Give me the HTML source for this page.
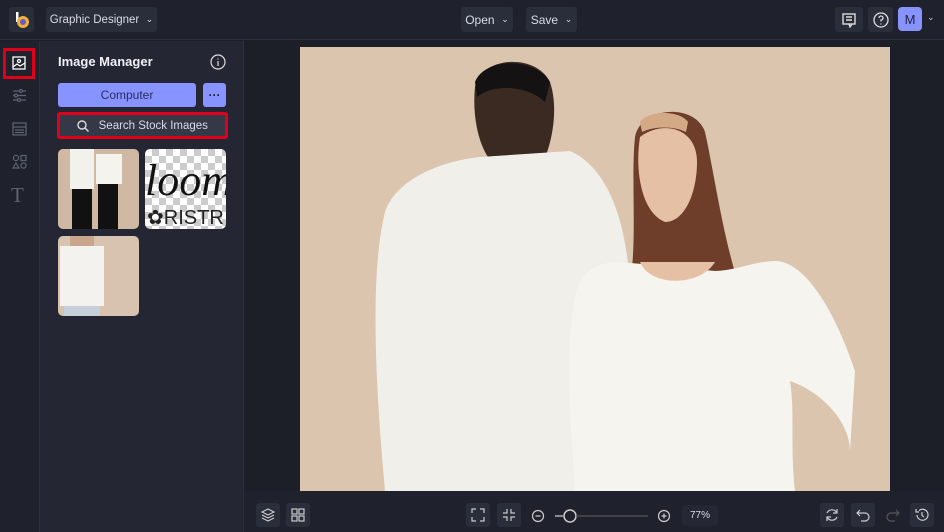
<!DOCTYPE html>
<html><head><style>
*{margin:0;padding:0;box-sizing:border-box}
body{width:944px;height:532px;background:#1c1f28;font-family:"Liberation Sans",sans-serif;position:relative;overflow:hidden;color:#e6e8ef}
.a{position:absolute}
.btn{position:absolute;background:#2a2e3a;border-radius:3px;color:#d8dbe4;font-size:12px;display:flex;align-items:center;justify-content:center}
</style></head><body>
<div class="a" style="left:0;top:0;width:944px;height:40px;background:#1f222c;border-bottom:1px solid #2c303b"></div>
<div class="a" style="left:0;top:41px;width:40px;height:491px;background:#1f222c;border-right:1px solid #2c303b"></div>
<div class="a" style="left:40px;top:41px;width:204px;height:491px;background:#242733;border-right:1px solid #2c303b"></div>
<div class="a" style="left:244px;top:491px;width:700px;height:41px;background:#1f222c"></div>
<div class="btn" style="left:9px;top:7px;width:25px;height:25px;background:#2a2e3a"><svg width="16" height="18"><rect x="2" y="1" width="2.5" height="10" fill="#fff"/><circle cx="9" cy="11" r="6" fill="#f2b134"/><circle cx="9" cy="11" r="3" fill="#6a5acd"/></svg></div>
<div class="btn" style="left:46px;top:7px;width:111px;height:25px;font-size:11.5px">Graphic Designer&nbsp;&nbsp;<span style="font-size:9px">⌄</span></div>
<div class="btn" style="left:461px;top:7px;width:52px;height:25px">Open&nbsp;&nbsp;<span style="font-size:9px">⌄</span></div>
<div class="btn" style="left:526px;top:7px;width:51px;height:25px">Save&nbsp;&nbsp;<span style="font-size:9px">⌄</span></div>
<div class="btn" style="left:835px;top:7px;width:28px;height:25px"><svg width="16" height="16" fill="none" stroke="#ddd" stroke-width="1.4"><rect x="2" y="2" width="12" height="10"/><path d="M5 5h6M5 8h6M8 12l1 3 2-3"/></svg></div>
<div class="btn" style="left:868px;top:7px;width:25px;height:25px"><svg width="16" height="16" fill="none" stroke="#ddd" stroke-width="1.3"><circle cx="8" cy="8" r="7"/><path d="M6 6a2 2 0 1 1 2 2v1.5M8 11.5v1"/></svg></div>
<div class="btn" style="left:898px;top:7px;width:24px;height:24px;background:#8793ff;color:#1e2340;font-size:13px;border-radius:4px">M</div>
<div class="a" style="left:927px;top:12px;font-size:9px;color:#ccc">⌄</div>
<div class="a" style="left:3px;top:48px;width:32px;height:31px;border:3px solid #e0001a"></div>
<svg class="a" style="left:12px;top:56px" width="14" height="14" fill="none" stroke="#fff" stroke-width="1.3"><rect x="1" y="1" width="12" height="12"/><circle cx="7" cy="5" r="1.5"/><path d="M1 11l4-3 3 2 5-3"/></svg>
<svg class="a" style="left:12px;top:88px" width="15" height="15" fill="none" stroke="#5d6372" stroke-width="1.2"><path d="M1 3h13M1 7.5h13M1 12h13"/><circle cx="9" cy="3" r="1.5" fill="#1f222c"/><circle cx="4" cy="7.5" r="1.5" fill="#1f222c"/><circle cx="7" cy="12" r="1.5" fill="#1f222c"/></svg>
<svg class="a" style="left:12px;top:122px" width="15" height="14" fill="none" stroke="#5d6372" stroke-width="1.2"><rect x="1" y="1" width="13" height="12"/><path d="M1 5h13M3 8h9M3 10.5h9"/></svg>
<svg class="a" style="left:12px;top:154px" width="15" height="15" fill="none" stroke="#5d6372" stroke-width="1.2"><circle cx="4" cy="4" r="2.6"/><rect x="9" y="1.5" width="5" height="5"/><path d="M4 9l3 5H1z"/><circle cx="11.5" cy="11.5" r="2.6"/></svg>
<div class="a" style="left:11px;top:183px;font-family:'Liberation Serif',serif;font-size:21px;color:#5d6372">T</div>
<div class="a" style="left:58px;top:54px;font-size:13px;font-weight:bold;color:#eef0f5">Image Manager</div>
<svg class="a" style="left:210px;top:54px" width="16" height="16" fill="none" stroke="#ddd" stroke-width="1.2"><circle cx="8" cy="8" r="7"/><path d="M8 7v5M8 4.5v1"/></svg>
<div class="btn" style="left:58px;top:83px;width:138px;height:24px;background:#8793ff;color:#2a2f60;font-size:12px">Computer</div>
<div class="btn" style="left:203px;top:83px;width:23px;height:24px;background:#8793ff;color:#1e2340;font-weight:bold">···</div>
<div class="btn" style="left:57px;top:112px;width:171px;height:27px;background:#343847;border:3px solid #e0001a;font-size:11.5px"><svg width="12" height="12" fill="none" stroke="#ddd" stroke-width="1.4"><circle cx="5" cy="5" r="4"/><path d="M8 8l3.5 3.5"/></svg>&nbsp;&nbsp;&nbsp;Search Stock Images</div>
<div class="a" style="left:58px;top:149px;width:81px;height:80px;background:#cfb9a4;border-radius:5px;overflow:hidden"><svg width="81" height="80"><rect x="12" y="0" width="24" height="40" fill="#f3f1ec"/><rect x="14" y="40" width="20" height="40" fill="#111"/><rect x="38" y="5" width="26" height="30" fill="#f5f3ee"/><rect x="40" y="35" width="20" height="45" fill="#111"/></svg></div>
<div class="a" style="left:145px;top:149px;width:81px;height:80px;background:repeating-conic-gradient(#ccc 0 25%,#fff 0 50%) 0 0/14px 14px;border-radius:5px;overflow:hidden"><div class="a" style="left:0;top:6px;font-family:'Liberation Serif',serif;font-style:italic;font-size:44px;color:#111">loom</div><div class="a" style="left:2px;top:56px;font-size:20px;color:#222">✿RISTR</div></div>
<div class="a" style="left:58px;top:236px;width:81px;height:80px;background:#d7c3b0;border-radius:5px;overflow:hidden"><svg width="81" height="80"><rect x="2" y="10" width="44" height="60" fill="#f4f2ee"/><rect x="6" y="70" width="36" height="10" fill="#c6d0db"/><rect x="12" y="0" width="24" height="10" fill="#caa58e"/></svg></div>
<svg class="a" style="left:300px;top:47px" width="590" height="444">
<rect width="590" height="444" fill="#dbc5ae"/>
<path d="M175 40c5-30 60-35 75-5 10 30 0 70-10 85-20 10-45 5-55-15-10-20-12-45-10-65z" fill="#3a2a22"/>
<path d="M175 35c10-25 60-25 75 0l-5 20c-15-15-50-20-68-5z" fill="#141212"/>
<path d="M180 110c-45 5-85 25-95 55-15 60-10 170 0 279h235c5-60 20-130 10-190 0-60-15-130-60-150z" fill="#f1efea"/>
<path d="M335 90c5-30 60-35 70-5 10 45 20 120 40 170l-120 5c15-50 5-120 10-170z" fill="#6e3e2a"/>
<path d="M340 75c8-12 40-12 48 0l-2 10c-12-6-32-6-44 0z" fill="#d4a985"/>
<path d="M340 90c-5 30 0 75 25 85 20 0 32-30 32-60 0-35-35-42-57-25z" fill="#e6c0a5"/>
<path d="M320 215c-30 0-40 15-45 35-10 50-5 120 0 194h220c-5-40 0-80-5-110 30 10 60 40 60 70l5-80c-20-60-50-110-80-110-20 0-40 10-60 10z" fill="#f6f4ef"/>
<path d="M340 215c10 25 60 25 75 0z" fill="#e6c0a5"/>
</svg>
<div class="btn" style="left:256px;top:503px;width:24px;height:24px"><svg width="14" height="14" fill="none" stroke="#ccc" stroke-width="1.2"><path d="M7 1l6 3-6 3-6-3zM1 7l6 3 6-3M1 10l6 3 6-3"/></svg></div>
<div class="btn" style="left:286px;top:503px;width:24px;height:24px"><svg width="14" height="14" fill="none" stroke="#ccc" stroke-width="1.2"><rect x="1" y="1" width="5" height="5"/><rect x="8" y="1" width="5" height="5"/><rect x="1" y="8" width="5" height="5"/><rect x="8" y="8" width="5" height="5"/></svg></div>
<div class="btn" style="left:466px;top:503px;width:24px;height:24px"><svg width="14" height="14" fill="none" stroke="#ccc" stroke-width="1.2"><path d="M1 5V1h4M9 1h4v4M13 9v4H9M5 13H1V9"/></svg></div>
<div class="btn" style="left:497px;top:503px;width:24px;height:24px"><svg width="14" height="14" fill="none" stroke="#ccc" stroke-width="1.2"><path d="M1 5h4V1M9 1v4h4M13 9H9v4M5 13V9H1"/></svg></div>
<svg class="a" style="left:531px;top:508px" width="130" height="16" fill="none" stroke="#ccc" stroke-width="1.2"><circle cx="7" cy="8" r="5.5"/><path d="M4.5 8h5M24 8h8"/><circle cx="39" cy="8" r="6" stroke-width="1.5"/><path d="M45 8h72" stroke="#555"/></svg>
<svg class="a" style="left:657px;top:508px" width="16" height="16" fill="none" stroke="#ccc" stroke-width="1.2"><circle cx="7" cy="8" r="5.5"/><path d="M4.5 8h5M7 5.5v5"/></svg>
<div class="btn" style="left:682px;top:505px;width:36px;height:21px;background:#252834;font-size:10px">77%</div>
<div class="btn" style="left:820px;top:503px;width:24px;height:24px"><svg width="14" height="14" fill="none" stroke="#ccc" stroke-width="1.2"><path d="M12 5A5.5 5.5 0 0 0 2 5M2 9a5.5 5.5 0 0 0 10 0M12 1v4H8M2 13V9h4"/></svg></div>
<div class="btn" style="left:851px;top:503px;width:24px;height:24px"><svg width="14" height="14" fill="none" stroke="#ccc" stroke-width="1.2"><path d="M4 2L1 5l3 3M1 5h8a4 4 0 0 1 0 8H5"/></svg></div>
<svg class="a" style="left:886px;top:508px" width="14" height="14" fill="none" stroke="#555" stroke-width="1.2"><path d="M10 2l3 3-3 3M13 5H5a4 4 0 0 0 0 8h4"/></svg>
<div class="btn" style="left:910px;top:503px;width:24px;height:24px"><svg width="14" height="14" fill="none" stroke="#ccc" stroke-width="1.2"><path d="M2 7a5.5 5.5 0 1 0 2-4.5M1 1v3h3M7 4v3.5l2 1.5"/></svg></div>
</body></html>
